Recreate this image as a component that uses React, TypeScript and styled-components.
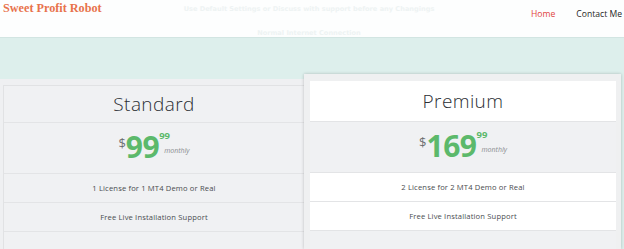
import React from "react";
import styled, { createGlobalStyle } from "styled-components";

const Global = createGlobalStyle`
  html, body { margin: 0; padding: 0; }
  body { background: #ddefec; font-family: "Open Sans", "Liberation Sans", sans-serif; overflow: hidden; }
  #root { width: 624px; height: 249px; overflow: hidden; }
`;

const Header = styled.header`
  height: 37px;
  background: #fdfefe;
  border-bottom: 1px solid #d2e5e2;
  display: grid;
  grid-template-columns: 1fr auto 1fr;
  align-items: start;
`;

const Logo = styled.div`
  font-family: "Liberation Serif", "DejaVu Serif", serif;
  font-weight: 700;
  font-size: 12.2px;
  color: #e8734c;
  padding: 1px 0 0 3px;
  line-height: 14px;
  white-space: nowrap;
`;

const Notices = styled.div`
  display: flex;
  flex-direction: column;
  align-items: center;
  gap: 14px;
  padding-top: 4px;
  margin-right: 6px;
`;

const Notice = styled.span`
  font-family: "DejaVu Sans", Verdana, sans-serif;
  font-weight: 700;
  font-size: 6.6px;
  line-height: 10px;
  color: #eef3f3;
  white-space: nowrap;
`;

const Nav = styled.nav`
  display: flex;
  justify-content: flex-end;
  gap: 21px;
  padding: 8px 2px 0 0;
`;

const NavLink = styled.a<{ $active?: boolean }>`
  font-size: 8.6px;
  line-height: 12px;
  color: ${(p) => (p.$active ? "#e0443c" : "#1f1f1f")};
  text-decoration: none;
  white-space: nowrap;
`;

const Band = styled.div`
  height: 41px;
  background: #ddefec;
`;

const Pricing = styled.section`
  display: flex;
  align-items: stretch;
  height: 170px;
  font-family: "Open Sans", "Liberation Sans", sans-serif;
`;

const StandardWrap = styled.div`
  width: 304px;
  background: #eff0f2;
  padding: 6px 0 0 3px;
  box-sizing: border-box;
`;

const PremiumWrap = styled.div`
  width: 317px;
  margin-top: -5px;
  background: #eff0f1;
  padding: 7px 5px 0 6px;
  box-sizing: border-box;
  box-shadow: 0 0 3px rgba(0, 0, 0, 0.22);
  position: relative;
  z-index: 1;
`;

const Card = styled.div<{ $bordered?: boolean }>`
  display: flex;
  flex-direction: column;
  border-left: ${(p) => (p.$bordered ? "1px solid #e1e2e4" : "none")};
  border-top: ${(p) => (p.$bordered ? "1px solid #e1e2e4" : "none")};
`;

const Row = styled.div<{ $h: number; $bg: string }>`
  height: ${(p) => p.$h}px;
  background: ${(p) => p.$bg};
  border-bottom: 1px solid #e3e4e6;
  box-sizing: border-box;
  display: flex;
  align-items: center;
  justify-content: center;
`;

const Title = styled.h2`
  margin: 0;
  font-weight: 300;
  font-size: 19px;
  letter-spacing: 0.4px;
  color: #2b2e33;
`;

const Price = styled.div`
  display: flex;
  align-items: flex-start;
  color: #5cb96b;
  margin-top: -2px;
`;

const Dollar = styled.span`
  font-size: 13px;
  color: #6d6f72;
  margin-top: 4px;
`;

const Amount = styled.span`
  font-size: 30px;
  font-weight: 700;
  line-height: 34px;
  letter-spacing: -0.5px;
`;

const Cents = styled.div`
  display: flex;
  flex-direction: column;
`;

const Sup = styled.span`
  font-size: 9.5px;
  font-weight: 700;
  line-height: 12px;
`;

const Monthly = styled.span`
  font-size: 7px;
  font-style: italic;
  color: #8a8c8f;
  margin-top: 4px;
  margin-left: 5px;
`;

const Feature = styled.span`
  font-size: 7.6px;
  color: #4a4c50;
  letter-spacing: 0.15px;
`;

type Plan = {
  name: string;
  amount: string;
  features: string[];
};

const plans: Plan[] = [
  { name: "Standard", amount: "99", features: ["1 License for 1 MT4 Demo or Real", "Free Live Installation Support"] },
  { name: "Premium", amount: "169", features: ["2 License for 2 MT4 Demo or Real", "Free Live Installation Support"] },
];

function PlanCard({ plan, premium }: { plan: Plan; premium?: boolean }) {
  const light = premium ? "#ffffff" : "#f0f1f3";
  const gray = "#f0f1f3";
  return (
    <Card $bordered={!premium}>
      <Row $h={premium ? 41 : 37} $bg={light}>
        <Title>{plan.name}</Title>
      </Row>
      <Row $h={51} $bg={gray}>
        <Price>
          <Dollar>$</Dollar>
          <Amount>{plan.amount}</Amount>
          <Cents>
            <Sup>99</Sup>
            <Monthly>monthly</Monthly>
          </Cents>
        </Price>
      </Row>
      {plan.features.map((f) => (
        <Row key={f} $h={29} $bg={light}>
          <Feature>{f}</Feature>
        </Row>
      ))}
      <Row $h={40} $bg={gray} />
    </Card>
  );
}

export default function App() {
  return (
    <>
      <Global />
      <Header>
        <Logo>Sweet Profit Robot</Logo>
        <Notices>
          <Notice>Use Default Settings or Discuss with support before any Changings</Notice>
          <Notice>Normal Internet Connection</Notice>
        </Notices>
        <Nav>
          <NavLink $active href="#">Home</NavLink>
          <NavLink href="#">Contact Me</NavLink>
        </Nav>
      </Header>
      <Band />
      <Pricing>
        <StandardWrap>
          <PlanCard plan={plans[0]} />
        </StandardWrap>
        <PremiumWrap>
          <PlanCard plan={plans[1]} premium />
        </PremiumWrap>
      </Pricing>
    </>
  );
}
